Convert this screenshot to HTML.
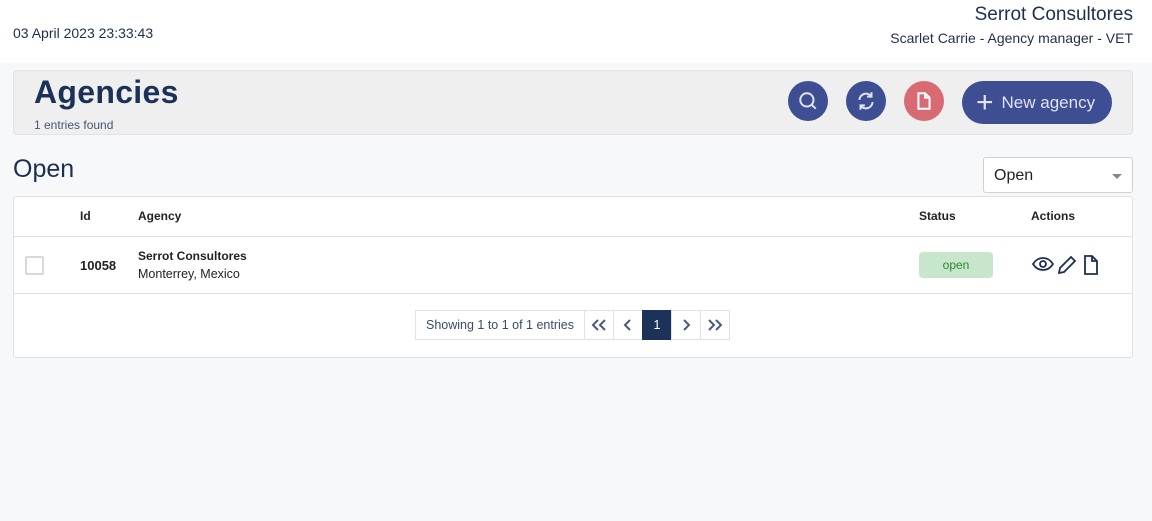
<!DOCTYPE html>
<html><head><meta charset="utf-8"><style>
*{box-sizing:border-box;margin:0;padding:0}
body{width:1152px;height:521px;background:#f7f8fa;font-family:"Liberation Sans",sans-serif;color:#1e2e50;position:relative;overflow:hidden}
.top{position:absolute;left:0;top:0;width:1152px;height:62px;background:#fff}
.abs{position:absolute;white-space:nowrap}
.hdr{position:absolute;left:13px;top:70px;width:1120px;height:65px;background:#efeff0;border:1px solid #e2e3e6;border-radius:4px}
.cb{position:absolute;width:40px;height:40px;border-radius:50%;top:81px;display:flex;align-items:center;justify-content:center}
.card{position:absolute;left:13px;top:196px;width:1120px;height:162px;background:#fff;border:1px solid #dfe0e3;border-radius:3px}
.line{position:absolute;left:0;width:100%;height:1px;background:#dedfe2}
.pg{position:absolute;top:310px;height:30px;border:1px solid #e1e2e6;background:#fff;display:flex;align-items:center;justify-content:center;font-size:12.5px;color:#3a4a6a}
</style></head><body>
<div class="top"></div>
<div class="abs" style="left:13px;top:25px;font-size:14px">03 April 2023 23:33:43</div>
<div class="abs" style="right:19px;top:4px;font-size:19px">Serrot Consultores</div>
<div class="abs" style="right:19px;top:30px;font-size:14px">Scarlet Carrie - Agency manager - VET</div>
<div class="hdr"></div>
<div class="abs" style="left:34px;top:74px;font-size:32px;font-weight:bold;color:#1b3158;letter-spacing:0.3px">Agencies</div>
<div class="abs" style="left:34px;top:118px;font-size:12px;color:#4a5570">1 entries found</div>
<div class="cb" style="left:788px;background:#3e4e93"><svg width="22" height="22" viewBox="0 0 20 20" fill="none" stroke="#dfe3f5" stroke-width="1.8"><circle cx="9" cy="9" r="6"/><path d="M13.5 13.5L17 17"/></svg></div>
<div class="cb" style="left:846px;background:#3e4e93"><svg width="22" height="22" viewBox="0 0 20 20" fill="none" stroke="#dfe3f5" stroke-width="1.8"><path d="M4 9a6 6 0 0 1 11-3M16 11a6 6 0 0 1-11 3"/><path d="M15 2v4h-4M5 18v-4h4"/></svg></div>
<div class="cb" style="left:904px;background:#d86a74"><svg width="18" height="20" viewBox="0 0 16 18" fill="none" stroke="#fff" stroke-width="1.8"><path d="M3 2h6l4 4v10H3z"/><path d="M9 2v4h4"/></svg></div>
<div class="abs" style="left:962px;top:81px;width:150px;height:43px;border-radius:22px;background:#3e4e93;color:#e0e3f3;font-size:17px;display:flex;align-items:center;padding-left:14px"><span style="font-size:30px;font-weight:300;margin-right:8px;line-height:1">+</span>New agency</div>
<div class="abs" style="left:13px;top:155px;font-size:25px">Open</div>
<div class="abs" style="left:983px;top:157px;width:150px;height:36px;background:#fff;border:1px solid #cfd1d6;border-radius:3px;font-size:16px;padding:9px 10px;color:#222">Open<span style="position:absolute;right:10px;top:16px;border:5px solid transparent;border-top:5px solid #888"></span></div>
<div class="card">
<div class="line" style="top:39px"></div>
<div class="line" style="top:96px"></div>
<div class="abs" style="left:66px;top:12px;font-size:12px;font-weight:bold;color:#222">Id</div>
<div class="abs" style="left:124px;top:12px;font-size:12px;font-weight:bold;color:#222">Agency</div>
<div class="abs" style="left:905px;top:12px;font-size:12px;font-weight:bold;color:#222">Status</div>
<div class="abs" style="left:1017px;top:12px;font-size:12px;font-weight:bold;color:#222">Actions</div>
<div class="abs" style="left:11px;top:59px;width:19px;height:19px;border:2px solid #d8d9dc;border-radius:2px"></div>
<div class="abs" style="left:66px;top:61px;font-size:13px;font-weight:bold;color:#222">10058</div>
<div class="abs" style="left:124px;top:52px;font-size:12px;font-weight:bold;color:#222">Serrot Consultores</div>
<div class="abs" style="left:124px;top:70px;font-size:12.5px;color:#222">Monterrey, Mexico</div>
<div class="abs" style="left:905px;top:55px;width:74px;height:26px;background:#c8e6cc;border-radius:4px;color:#2c8a2e;font-size:12px;text-align:center;line-height:26px">open</div>
<svg class="abs" style="left:1017px;top:56px" width="72" height="24" viewBox="0 0 72 24" fill="none" stroke="#1e2e50" stroke-width="1.8"><path d="M2 11c5-8 15-8 20 0c-5 8-15 8-20 0z"/><circle cx="12" cy="11" r="3"/><path d="M28 20l1-5 11-11 4 4-11 11z"/><path d="M54 3h7l5 5v13H54z"/><path d="M61 3v5h5"/></svg>
</div>
<div class="pg" style="left:415px;width:170px">Showing 1 to 1 of 1 entries</div>
<div class="pg" style="left:584px;width:30px"><svg width="18" height="14" viewBox="0 0 18 14" fill="none" stroke="#4a5a7a" stroke-width="2"><path d="M8 2L3 7l5 5M15 2l-5 5 5 5"/></svg></div>
<div class="pg" style="left:613px;width:30px"><svg width="10" height="14" viewBox="0 0 10 14" fill="none" stroke="#4a5a7a" stroke-width="2"><path d="M7 2L2 7l5 5"/></svg></div>
<div class="pg" style="left:642px;width:30px;background:#1d3258;color:#fff;border-color:#1d3258">1</div>
<div class="pg" style="left:671px;width:30px"><svg width="10" height="14" viewBox="0 0 10 14" fill="none" stroke="#4a5a7a" stroke-width="2"><path d="M3 2l5 5-5 5"/></svg></div>
<div class="pg" style="left:700px;width:30px"><svg width="18" height="14" viewBox="0 0 18 14" fill="none" stroke="#4a5a7a" stroke-width="2"><path d="M3 2l5 5-5 5M10 2l5 5-5 5"/></svg></div>
</body></html>
